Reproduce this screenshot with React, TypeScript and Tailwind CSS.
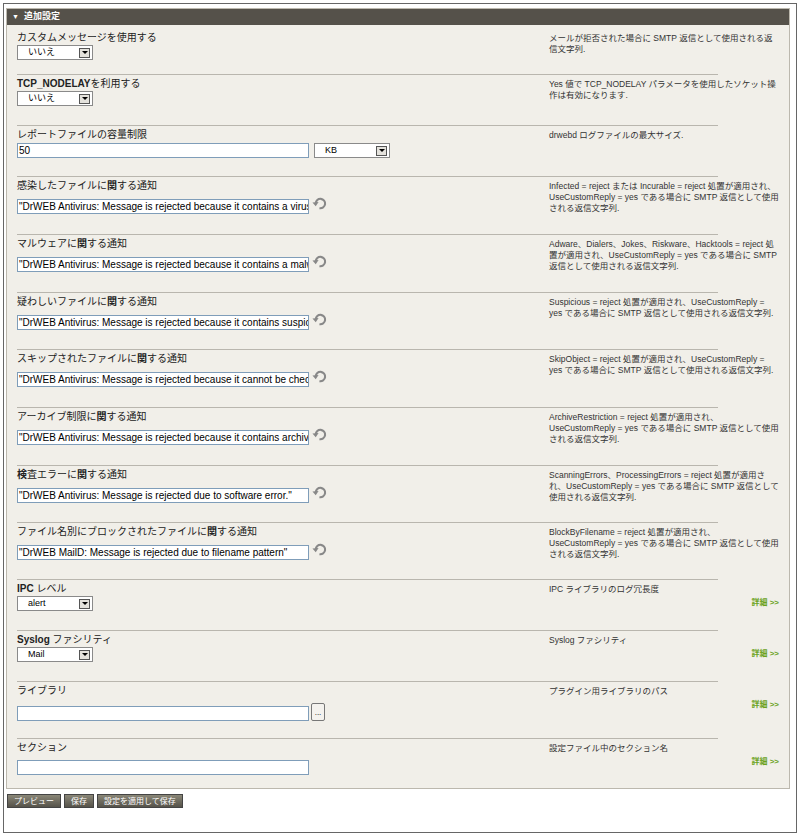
const F = { fontFamily: '"Liberation Sans","Noto Sans CJK JP",sans-serif' };

function Select({ value, w = "w-[76px]" }: { value: string; w?: string }) {
  return (
    <div className={`${w} h-[15px] bg-white border border-[#8a8a8a] flex items-center justify-between pl-[10px] pr-[2px] text-[9px] text-black`}>
      <span>{value}</span>
      <span className="w-[11px] h-[10px] bg-[#e4e2dc] border border-[#555] flex items-center justify-center">
        <span className="block w-0 h-0 border-l-[3px] border-r-[3px] border-t-[3px] border-l-transparent border-r-transparent border-t-black" />
      </span>
    </div>
  );
}

function Input({ value = "" }: { value?: string }) {
  return (
    <div className="w-[292px] h-[15px] bg-white border border-[#7f9db9] overflow-hidden whitespace-nowrap text-[10px] leading-[13px] pl-[1px] text-black">
      {value}
    </div>
  );
}

function Undo() {
  return (
    <svg width="15" height="15" viewBox="0 0 16 16" className="ml-[3px] -mt-[8px]">
      <path d="M4 9 A5 5 0 1 1 8 14" fill="none" stroke="#888" strokeWidth="2.2" />
      <path d="M0.5 8 L4 12 L7 7.5 Z" fill="#888" />
    </svg>
  );
}

type Row = { label: React.ReactNode; desc: string; h: number; ctrl: React.ReactNode; more?: boolean };

const msg = (s: string) => (
  <div className="flex items-center mt-[7px]">
    <Input value={s} />
    <Undo />
  </div>
);

const rows: Row[] = [
  { label: "カスタムメッセージを使用する", desc: "メールが拒否された場合に SMTP 返信として使用される返信文字列.", h: 45, ctrl: <div className="mt-[1px]"><Select value="いいえ" /></div> },
  { label: <><b>TCP_NODELAY</b>を利用する</>, desc: "Yes 値で TCP_NODELAY パラメータを使用したソケット操作は有効になります.", h: 50, ctrl: <div className="mt-[1px]"><Select value="いいえ" /></div> },
  { label: "レポートファイルの容量制限", desc: "drwebd ログファイルの最大サイズ.", h: 50, ctrl: <div className="flex gap-[5px] mt-[2px]"><Input value="50" /><Select value="KB" /></div> },
  { label: <>感染したファイルに<b>関</b>する通知</>, desc: "Infected = reject または Incurable = reject 処置が適用され、UseCustomReply = yes である場合に SMTP 返信として使用される返信文字列.", h: 57, ctrl: msg('"DrWEB Antivirus: Message is rejected because it contains a virus"') },
  { label: <>マルウェアに<b>関</b>する通知</>, desc: "Adware、Dialers、Jokes、Riskware、Hacktools = reject 処置が適用され、UseCustomReply = yes である場合に SMTP 返信として使用される返信文字列.", h: 57, ctrl: msg('"DrWEB Antivirus: Message is rejected because it contains a malware"') },
  { label: <>疑わしいファイルに<b>関</b>する通知</>, desc: "Suspicious = reject 処置が適用され、UseCustomReply = yes である場合に SMTP 返信として使用される返信文字列.", h: 56, ctrl: msg('"DrWEB Antivirus: Message is rejected because it contains suspicious"') },
  { label: <>スキップされたファイルに<b>関</b>する通知</>, desc: "SkipObject = reject 処置が適用され、UseCustomReply = yes である場合に SMTP 返信として使用される返信文字列.", h: 57, ctrl: msg('"DrWEB Antivirus: Message is rejected because it cannot be checked"') },
  { label: <>アーカイブ制限に<b>関</b>する通知</>, desc: "ArchiveRestriction = reject 処置が適用され、UseCustomReply = yes である場合に SMTP 返信として使用される返信文字列.", h: 57, ctrl: msg('"DrWEB Antivirus: Message is rejected because it contains archive"') },
  { label: <><b>検</b>査エラーに<b>関</b>する通知</>, desc: "ScanningErrors、ProcessingErrors = reject 処置が適用され、UseCustomReply = yes である場合に SMTP 返信として使用される返信文字列.", h: 56, ctrl: msg('"DrWEB Antivirus: Message is rejected due to software error."') },
  { label: <>ファイル名別にブロックされたファイルに<b>関</b>する通知</>, desc: "BlockByFilename = reject 処置が適用され、UseCustomReply = yes である場合に SMTP 返信として使用される返信文字列.", h: 56, ctrl: msg('"DrWEB MailD: Message is rejected due to filename pattern"') },
  { label: <><b>IPC</b> レベル</>, desc: "IPC ライブラリのログ冗長度", h: 50, more: true, ctrl: <div className="mt-[1px]"><Select value="alert" /></div> },
  { label: <><b>Syslog</b> ファシリティ</>, desc: "Syslog ファシリティ", h: 50, more: true, ctrl: <div className="mt-[1px]"><Select value="Mail" /></div> },
  { label: "ライブラリ", desc: "プラグイン用ライブラリのパス", h: 56, more: true, ctrl: <div className="flex items-end mt-[6px]"><Input /><div className="ml-[2px] w-[14px] h-[18px] bg-[#f4f2ee] border border-[#777] rounded-[2px] text-[8px] leading-[18px] text-center">...</div></div> },
  { label: "セクション", desc: "設定ファイル中のセクション名", h: 49, more: true, ctrl: <div className="mt-[6px]"><Input /></div> },
];

export default function App() {
  return (
    <div style={F} className="w-[800px] h-[837px] bg-white p-[3px]">
      <div className="w-[794px] h-[830px] border border-[#666] pt-[4px] px-[2px]">
        <div className="w-[784px] border border-[#bcb8ae] bg-[#f1efe9]">
          <div className="h-[16px] bg-[#55514a] text-white text-[9px] font-bold flex items-center pl-[5px] gap-[5px]">
            <span className="text-[7px]">▼</span>追加設定
          </div>
          <div className="pl-[10px] pt-[4px]">
            {rows.map((r, i) => (
              <div key={i}>
                {i > 0 && <div className="w-[701px] h-[1px] bg-[#b9b6ae]" />}
                <div className="flex" style={{ height: r.h }}>
                  <div className="w-[532px] pt-[2px]">
                    <div className="text-[10px] leading-[13px] text-[#222]">{r.label}</div>
                    {r.ctrl}
                  </div>
                  <div className="w-[230px] pt-[4px] text-[8.5px] leading-[11px] text-[#333]">
                    {r.desc}
                    {r.more && <div className="text-right text-[#6aa21c] font-bold text-[8px] mt-[2px]">詳細 &gt;&gt;</div>}
                  </div>
                </div>
              </div>
            ))}
          </div>
        </div>
        <div className="flex gap-[3px] mt-[5px] ml-[1px]">
          {["プレビュー", "保存", "設定を適用して保存"].map((b) => (
            <div key={b} className="h-[14px] px-[6px] bg-gradient-to-b from-[#8a8778] to-[#56534a] text-white text-[8px] leading-[14px] border border-[#444]">{b}</div>
          ))}
        </div>
      </div>
    </div>
  );
}
